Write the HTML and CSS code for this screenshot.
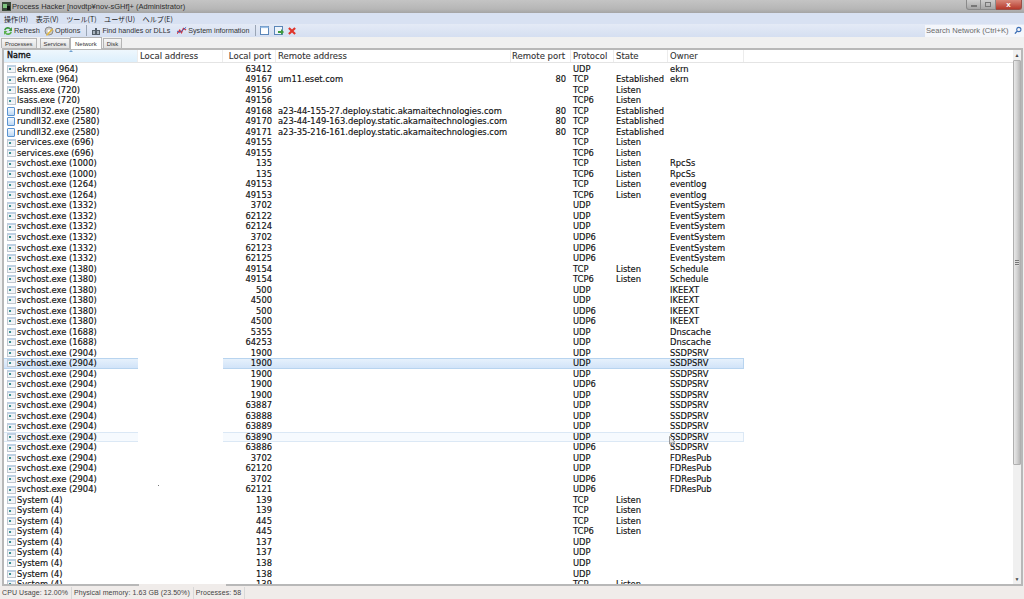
FILE: index.html
```html
<!DOCTYPE html>
<html lang="ja">
<head>
<meta charset="utf-8">
<title>Process Hacker</title>
<link rel="stylesheet" href="styles.css">
</head>
<body>
<div class="window">
  <header class="titlebar">
    <svg class="appicon" width="9" height="9" viewBox="0 0 9 9"><rect width="9" height="9" fill="#3a4a3a"/><rect x="1" y="2" width="4" height="4" fill="#7fc47f"/><rect x="5" y="4" width="3" height="4" fill="#111"/></svg>
    <span class="titletext">Process Hacker [novdtp¥nov-sGHf]+ (Administrator)</span>
    <div class="winbtns"><span class="wb min"><i></i></span><span class="wb max"><i></i></span><span class="wb close">x</span></div>
  </header>
  <nav class="menubar"><span>操作(H)</span><span>表示(V)</span><span>ツール(T)</span><span>ユーザ(U)</span><span>ヘルプ(E)</span></nav>
  <div class="toolbar">
    <span class="tool"><svg width="10" height="10" viewBox="0 0 10 10"><path d="M1 4 A4 4 0 0 1 8 2.5 L9 1 V5 H5.5 L7 3.6 A2.6 2.6 0 0 0 2.5 4.5Z" fill="#3f9a3f"/><path d="M9 6 A4 4 0 0 1 2 7.5 L1 9 V5 H4.5 L3 6.4 A2.6 2.6 0 0 0 7.5 5.5Z" fill="#5ab04f"/></svg>Refresh</span>
    <span class="tool"><svg width="10" height="10" viewBox="0 0 10 10"><circle cx="5" cy="5" r="4" fill="#c9c9c9" stroke="#8c8c8c"/><circle cx="5" cy="5" r="1.5" fill="#fff"/><path d="M2 9 L8 2.5 L9 3.5 L3 10Z" fill="#e6b93c"/></svg>Options</span>
    <span class="sep"></span>
    <span class="tool find"><svg width="10" height="10" viewBox="0 0 10 10"><path d="M1 4h3V2h2v2h3v5H1z" fill="#55606b"/><path d="M2 5h2v3H2zM6 5h2v3H6z" fill="#a8b3bd"/></svg>Find handles or DLLs</span>
    <span class="tool sysinfo"><svg width="10" height="10" viewBox="0 0 11 10"><path d="M0 8 L3 4 L5 7 L7 2 L10 4" fill="none" stroke="#d9363e" stroke-width="1.3"/><path d="M0 5 L3 7 L6 4 L10 1" fill="none" stroke="#2c5fbf" stroke-width="1"/></svg>System information</span>
    <span class="sep"></span>
    <span class="tool iconly"><svg width="9" height="9" viewBox="0 0 9 9"><rect x=".5" y=".5" width="8" height="8" fill="#fff" stroke="#5b86b8"/><rect x=".5" y=".5" width="8" height="1.6" fill="#9cc0e6"/></svg></span>
    <span class="tool iconly tight"><svg width="10" height="10" viewBox="0 0 10 10"><rect x=".5" y=".5" width="8" height="8" fill="#eef4fb" stroke="#5b86b8"/><path d="M4 5h3V3l3 3-3 3V7H4z" fill="#3f9a3f"/></svg></span>
    <span class="tool iconly"><svg width="8" height="8" viewBox="0 0 9 9"><path d="M1 1 L8 8 M8 1 L1 8" stroke="#e0352b" stroke-width="2.4"/></svg></span>
    <div class="search"><span>Search Network (Ctrl+K)</span><svg width="8" height="9" viewBox="0 0 9 9"><circle cx="5.4" cy="3.4" r="2.4" fill="none" stroke="#3c6fb5" stroke-width="1.2"/><path d="M3.6 5.2 L1 8" stroke="#3c6fb5" stroke-width="1.6"/></svg></div>
  </div>
  <div class="tabs"><span class="tab">Processes</span><span class="tab">Services</span><span class="tab active">Network</span><span class="tab">Disk</span></div>
  <main class="panel">
    <div class="listarea">
      <div class="r head"><span class="n hot">Name</span><span class="la">Local address</span><span class="lp">Local port</span><span class="ra">Remote address</span><span class="rp">Remote port</span><span>Protocol</span><span>State</span><span>Owner</span></div>
      <div class="rows">
<div class="r"><span class="n"><i class="ic"></i>ekrn.exe (964)</span><span class="la"></span><span class="lp">63412</span><span class="ra"></span><span class="rp"></span><span>UDP</span><span></span><span>ekrn</span></div>
<div class="r"><span class="n"><i class="ic"></i>ekrn.exe (964)</span><span class="la"></span><span class="lp">49167</span><span class="ra">um11.eset.com</span><span class="rp">80</span><span>TCP</span><span>Established</span><span>ekrn</span></div>
<div class="r"><span class="n"><i class="ic"></i>lsass.exe (720)</span><span class="la"></span><span class="lp">49156</span><span class="ra"></span><span class="rp"></span><span>TCP</span><span>Listen</span><span></span></div>
<div class="r"><span class="n"><i class="ic"></i>lsass.exe (720)</span><span class="la"></span><span class="lp">49156</span><span class="ra"></span><span class="rp"></span><span>TCP6</span><span>Listen</span><span></span></div>
<div class="r"><span class="n"><i class="ic doc"></i>rundll32.exe (2580)</span><span class="la"></span><span class="lp">49168</span><span class="ra">a23-44-155-27.deploy.static.akamaitechnologies.com</span><span class="rp">80</span><span>TCP</span><span>Established</span><span></span></div>
<div class="r"><span class="n"><i class="ic doc"></i>rundll32.exe (2580)</span><span class="la"></span><span class="lp">49170</span><span class="ra">a23-44-149-163.deploy.static.akamaitechnologies.com</span><span class="rp">80</span><span>TCP</span><span>Established</span><span></span></div>
<div class="r"><span class="n"><i class="ic doc"></i>rundll32.exe (2580)</span><span class="la"></span><span class="lp">49171</span><span class="ra">a23-35-216-161.deploy.static.akamaitechnologies.com</span><span class="rp">80</span><span>TCP</span><span>Established</span><span></span></div>
<div class="r"><span class="n"><i class="ic"></i>services.exe (696)</span><span class="la"></span><span class="lp">49155</span><span class="ra"></span><span class="rp"></span><span>TCP</span><span>Listen</span><span></span></div>
<div class="r"><span class="n"><i class="ic"></i>services.exe (696)</span><span class="la"></span><span class="lp">49155</span><span class="ra"></span><span class="rp"></span><span>TCP6</span><span>Listen</span><span></span></div>
<div class="r"><span class="n"><i class="ic"></i>svchost.exe (1000)</span><span class="la"></span><span class="lp">135</span><span class="ra"></span><span class="rp"></span><span>TCP</span><span>Listen</span><span>RpcSs</span></div>
<div class="r"><span class="n"><i class="ic"></i>svchost.exe (1000)</span><span class="la"></span><span class="lp">135</span><span class="ra"></span><span class="rp"></span><span>TCP6</span><span>Listen</span><span>RpcSs</span></div>
<div class="r"><span class="n"><i class="ic"></i>svchost.exe (1264)</span><span class="la"></span><span class="lp">49153</span><span class="ra"></span><span class="rp"></span><span>TCP</span><span>Listen</span><span>eventlog</span></div>
<div class="r"><span class="n"><i class="ic"></i>svchost.exe (1264)</span><span class="la"></span><span class="lp">49153</span><span class="ra"></span><span class="rp"></span><span>TCP6</span><span>Listen</span><span>eventlog</span></div>
<div class="r"><span class="n"><i class="ic"></i>svchost.exe (1332)</span><span class="la"></span><span class="lp">3702</span><span class="ra"></span><span class="rp"></span><span>UDP</span><span></span><span>EventSystem</span></div>
<div class="r"><span class="n"><i class="ic"></i>svchost.exe (1332)</span><span class="la"></span><span class="lp">62122</span><span class="ra"></span><span class="rp"></span><span>UDP</span><span></span><span>EventSystem</span></div>
<div class="r"><span class="n"><i class="ic"></i>svchost.exe (1332)</span><span class="la"></span><span class="lp">62124</span><span class="ra"></span><span class="rp"></span><span>UDP</span><span></span><span>EventSystem</span></div>
<div class="r"><span class="n"><i class="ic"></i>svchost.exe (1332)</span><span class="la"></span><span class="lp">3702</span><span class="ra"></span><span class="rp"></span><span>UDP6</span><span></span><span>EventSystem</span></div>
<div class="r"><span class="n"><i class="ic"></i>svchost.exe (1332)</span><span class="la"></span><span class="lp">62123</span><span class="ra"></span><span class="rp"></span><span>UDP6</span><span></span><span>EventSystem</span></div>
<div class="r"><span class="n"><i class="ic"></i>svchost.exe (1332)</span><span class="la"></span><span class="lp">62125</span><span class="ra"></span><span class="rp"></span><span>UDP6</span><span></span><span>EventSystem</span></div>
<div class="r"><span class="n"><i class="ic"></i>svchost.exe (1380)</span><span class="la"></span><span class="lp">49154</span><span class="ra"></span><span class="rp"></span><span>TCP</span><span>Listen</span><span>Schedule</span></div>
<div class="r"><span class="n"><i class="ic"></i>svchost.exe (1380)</span><span class="la"></span><span class="lp">49154</span><span class="ra"></span><span class="rp"></span><span>TCP6</span><span>Listen</span><span>Schedule</span></div>
<div class="r"><span class="n"><i class="ic"></i>svchost.exe (1380)</span><span class="la"></span><span class="lp">500</span><span class="ra"></span><span class="rp"></span><span>UDP</span><span></span><span>IKEEXT</span></div>
<div class="r"><span class="n"><i class="ic"></i>svchost.exe (1380)</span><span class="la"></span><span class="lp">4500</span><span class="ra"></span><span class="rp"></span><span>UDP</span><span></span><span>IKEEXT</span></div>
<div class="r"><span class="n"><i class="ic"></i>svchost.exe (1380)</span><span class="la"></span><span class="lp">500</span><span class="ra"></span><span class="rp"></span><span>UDP6</span><span></span><span>IKEEXT</span></div>
<div class="r"><span class="n"><i class="ic"></i>svchost.exe (1380)</span><span class="la"></span><span class="lp">4500</span><span class="ra"></span><span class="rp"></span><span>UDP6</span><span></span><span>IKEEXT</span></div>
<div class="r"><span class="n"><i class="ic"></i>svchost.exe (1688)</span><span class="la"></span><span class="lp">5355</span><span class="ra"></span><span class="rp"></span><span>UDP</span><span></span><span>Dnscache</span></div>
<div class="r"><span class="n"><i class="ic"></i>svchost.exe (1688)</span><span class="la"></span><span class="lp">64253</span><span class="ra"></span><span class="rp"></span><span>UDP</span><span></span><span>Dnscache</span></div>
<div class="r"><span class="n"><i class="ic"></i>svchost.exe (2904)</span><span class="la"></span><span class="lp">1900</span><span class="ra"></span><span class="rp"></span><span>UDP</span><span></span><span>SSDPSRV</span></div>
<div class="r sel"><span class="n"><i class="ic"></i>svchost.exe (2904)</span><span class="la"></span><span class="lp">1900</span><span class="ra"></span><span class="rp"></span><span>UDP</span><span></span><span>SSDPSRV</span></div>
<div class="r"><span class="n"><i class="ic"></i>svchost.exe (2904)</span><span class="la"></span><span class="lp">1900</span><span class="ra"></span><span class="rp"></span><span>UDP</span><span></span><span>SSDPSRV</span></div>
<div class="r"><span class="n"><i class="ic"></i>svchost.exe (2904)</span><span class="la"></span><span class="lp">1900</span><span class="ra"></span><span class="rp"></span><span>UDP6</span><span></span><span>SSDPSRV</span></div>
<div class="r"><span class="n"><i class="ic"></i>svchost.exe (2904)</span><span class="la"></span><span class="lp">1900</span><span class="ra"></span><span class="rp"></span><span>UDP</span><span></span><span>SSDPSRV</span></div>
<div class="r"><span class="n"><i class="ic"></i>svchost.exe (2904)</span><span class="la"></span><span class="lp">63887</span><span class="ra"></span><span class="rp"></span><span>UDP</span><span></span><span>SSDPSRV</span></div>
<div class="r"><span class="n"><i class="ic"></i>svchost.exe (2904)</span><span class="la"></span><span class="lp">63888</span><span class="ra"></span><span class="rp"></span><span>UDP</span><span></span><span>SSDPSRV</span></div>
<div class="r"><span class="n"><i class="ic"></i>svchost.exe (2904)</span><span class="la"></span><span class="lp">63889</span><span class="ra"></span><span class="rp"></span><span>UDP</span><span></span><span>SSDPSRV</span></div>
<div class="r hov"><span class="n"><i class="ic"></i>svchost.exe (2904)</span><span class="la"></span><span class="lp">63890</span><span class="ra"></span><span class="rp"></span><span>UDP</span><span></span><span>SSDPSRV</span></div>
<div class="r"><span class="n"><i class="ic"></i>svchost.exe (2904)</span><span class="la"></span><span class="lp">63886</span><span class="ra"></span><span class="rp"></span><span>UDP6</span><span></span><span>SSDPSRV</span></div>
<div class="r"><span class="n"><i class="ic"></i>svchost.exe (2904)</span><span class="la"></span><span class="lp">3702</span><span class="ra"></span><span class="rp"></span><span>UDP</span><span></span><span>FDResPub</span></div>
<div class="r"><span class="n"><i class="ic"></i>svchost.exe (2904)</span><span class="la"></span><span class="lp">62120</span><span class="ra"></span><span class="rp"></span><span>UDP</span><span></span><span>FDResPub</span></div>
<div class="r"><span class="n"><i class="ic"></i>svchost.exe (2904)</span><span class="la"></span><span class="lp">3702</span><span class="ra"></span><span class="rp"></span><span>UDP6</span><span></span><span>FDResPub</span></div>
<div class="r"><span class="n"><i class="ic"></i>svchost.exe (2904)</span><span class="la"></span><span class="lp">62121</span><span class="ra"></span><span class="rp"></span><span>UDP6</span><span></span><span>FDResPub</span></div>
<div class="r"><span class="n"><i class="ic"></i>System (4)</span><span class="la"></span><span class="lp">139</span><span class="ra"></span><span class="rp"></span><span>TCP</span><span>Listen</span><span></span></div>
<div class="r"><span class="n"><i class="ic"></i>System (4)</span><span class="la"></span><span class="lp">139</span><span class="ra"></span><span class="rp"></span><span>TCP</span><span>Listen</span><span></span></div>
<div class="r"><span class="n"><i class="ic"></i>System (4)</span><span class="la"></span><span class="lp">445</span><span class="ra"></span><span class="rp"></span><span>TCP</span><span>Listen</span><span></span></div>
<div class="r"><span class="n"><i class="ic"></i>System (4)</span><span class="la"></span><span class="lp">445</span><span class="ra"></span><span class="rp"></span><span>TCP6</span><span>Listen</span><span></span></div>
<div class="r"><span class="n"><i class="ic"></i>System (4)</span><span class="la"></span><span class="lp">137</span><span class="ra"></span><span class="rp"></span><span>UDP</span><span></span><span></span></div>
<div class="r"><span class="n"><i class="ic"></i>System (4)</span><span class="la"></span><span class="lp">137</span><span class="ra"></span><span class="rp"></span><span>UDP</span><span></span><span></span></div>
<div class="r"><span class="n"><i class="ic"></i>System (4)</span><span class="la"></span><span class="lp">138</span><span class="ra"></span><span class="rp"></span><span>UDP</span><span></span><span></span></div>
<div class="r"><span class="n"><i class="ic"></i>System (4)</span><span class="la"></span><span class="lp">138</span><span class="ra"></span><span class="rp"></span><span>UDP</span><span></span><span></span></div>
<div class="r"><span class="n"><i class="ic"></i>System (4)</span><span class="la"></span><span class="lp">139</span><span class="ra"></span><span class="rp"></span><span>TCP</span><span>Listen</span><span></span></div>
      </div>
      <span class="sortarrow"></span>
      <span class="speck"></span>
      <svg class="cursor" width="7" height="10" viewBox="0 0 7 10"><path d="M.5.5V8L2.3 6.5 3.5 9.5 5 9 3.8 6H6Z" fill="#e8e8e8" stroke="#777" stroke-width=".7"/></svg>
    </div>
    <div class="scrollbar"><span class="sb-btn">▲</span><span class="sb-thumb"><i class="sb-grip"></i></span><span class="sb-track"></span><span class="sb-btn">▼</span></div>
  </main>
  <footer class="statusbar"><span>CPU Usage: 12.00%</span><span>Physical memory: 1.63 GB (23.50%)</span><span>Processes: 58</span></footer>
</div>
</body>
</html>
```
FILE: styles.css
```css
* { box-sizing: border-box; }
html, body { margin: 0; padding: 0; height: 100%; overflow: hidden; }
body { background: #f0f0f0; color: #222; font-family: "Liberation Sans", Arial, sans-serif; font-size: 7.4px; }
.window { display: flex; flex-direction: column; width: 1024px; height: 599px; }

.titlebar { display: flex; align-items: center; height: 13px; flex: none; padding-left: 2px; background: linear-gradient(#c4c4c4, #b6b6b6 70%, #a4a4a4); }
.appicon { margin-right: 1px; }
.titletext { color: #2c2c2c; font-size: 7.5px; white-space: nowrap; }
.winbtns { display: flex; margin-left: auto; align-self: flex-start; margin-right: 2px; }
.wb { display: flex; align-items: center; justify-content: center; height: 10px; width: 15px; border: 1px solid #8a8a8a; border-top: 0; border-left: 0; background: linear-gradient(#cfcfcf, #a6a6a6); }
.wb.min { border-left: 1px solid #8a8a8a; border-radius: 0 0 0 3px; }
.wb.min i { width: 6px; height: 2px; margin-top: 3px; border: 1px solid #777; background: #eee; }
.wb.max i { width: 6px; height: 5px; border: 1px solid #777; }
.wb.close { width: 26px; color: #fff; font-weight: bold; font-size: 8px; line-height: 8px; border-color: #9a5048; border-radius: 0 0 3px 0; background: linear-gradient(#d8887a, #b63a2c); }

.menubar { display: flex; gap: 7.5px; align-items: center; height: 11px; flex: none; padding-left: 4px; background: #d8e1f2; color: #222; font-family: "Noto Sans CJK JP", "Liberation Sans", sans-serif; font-size: 7.1px; white-space: nowrap; }

.toolbar { display: flex; align-items: center; height: 13px; flex: none; padding-left: 3px; background: linear-gradient(#e4eaf6, #d5dff1); color: #333; white-space: nowrap; }
.tool { display: flex; align-items: center; gap: 1px; margin-right: 4px; }
.tool.find { margin-right: 7px; font-size: 7.15px; }
.tool.sysinfo { margin-right: 4px; font-size: 7.15px; }
.tool.iconly { margin-right: 5px; }
.tool.iconly.tight { margin-right: 4px; }
.sep { width: 1px; height: 11px; margin: 0 4px 0 2px; background: #9aa5b5; }
.search { display: flex; align-items: center; justify-content: space-between; margin-left: auto; width: 99px; height: 12px; padding: 0 2px 0 1px; background: #f4f6fb; color: #6a6a6a; font-size: 7.6px; }

.tabs { display: flex; align-items: flex-end; height: 11px; flex: none; padding-left: 1px; background: #f0f0f0; }
.tab { display: flex; align-items: center; height: 10px; padding: 0 3px; margin-right: 3px; border: 1px solid #b5b5b5; border-bottom: 0; background: linear-gradient(#f6f6f6, #e0e0e0); color: #333; font-size: 5.9px; }
.tab:nth-child(2) { margin-right: 0; }
.tab:nth-child(3) { margin-right: 1px; }
.tab.active { height: 12px; padding: 0 4px; background: #fff; position: relative; z-index: 1; margin-bottom: -1px; }

.panel { position: relative; display: flex; flex: 1; min-height: 0; margin: 0 1px 0 2px; border: 2px solid #b8b8b8; background: #fff; }
.panel::after { content: ""; position: absolute; left: 135px; bottom: -2px; width: 87px; height: 2px; background: #f0ecea; }
.listarea { position: relative; flex: 1; min-width: 0; display: flex; flex-direction: column; overflow: hidden; }
.rows { flex: 1; overflow: hidden; padding-top: .75px; }

.r { display: grid; grid-template-columns: 134px 85px 53px 235px 60px 43px 54px 76px; height: 10.52px; line-height: 10.52px; font-family: "DejaVu Sans", sans-serif; font-size: 8.35px; color: #111; white-space: nowrap; -webkit-text-stroke: .15px #111; }
.r > span { display: block; padding-left: 2px; overflow: hidden; }
.r .n { display: flex; align-items: center; padding-left: 3px; }
.r .lp { text-align: right; padding: 0 4px 0 0; }
.r .rp { text-align: right; padding: 0 5px 0 0; }

.r.head { height: 13px; line-height: 12px; flex: none; border-bottom: 1px solid #e4e4e4; color: #333; background: #fff; -webkit-text-stroke: .1px #333; }
.head > span { border-right: 1px solid #ececec; font-size: 8.5px; }
.head .hot { color: #111; font-size: 8px; background: linear-gradient(#eef7fd, #dceffc); -webkit-text-stroke: .35px #111; }
.sortarrow { position: absolute; left: 65px; top: 0; border: 2px solid transparent; border-top: 0; border-bottom: 2px solid #6d9fd0; }
.speck { position: absolute; left: 154px; top: 435px; width: 1px; height: 1px; background: #777; }

.ic { flex: none; width: 9px; height: 8px; margin-right: 1px; border: 1px solid #c0c7d0; border-top: 2px solid #bed0e3; background: linear-gradient(90deg, #3a9090 0 2px, #e8eef4 2px) 1px 1px / 5px 2px no-repeat, #f2f5f8; }
.ic.doc { width: 8px; height: 9px; margin-right: 2px; border: 1px solid #5b93d0; border-radius: 1px; background: linear-gradient(#f4f9ff, #bcd8f4); }

.sel > span:not(.la) { background: linear-gradient(#e8f2fc, #cfe2f8); box-shadow: inset 0 1px #b8d4ef, inset 0 -1px #b8d4ef; }
.sel > span:last-child { box-shadow: inset 0 1px #b8d4ef, inset 0 -1px #b8d4ef, inset -1px 0 #b8d4ef; }
.hov > span:not(.la) { background: #f6fafe; box-shadow: inset 0 1px #dbe8f5, inset 0 -1px #dbe8f5; }
.hov > span:last-child { box-shadow: inset 0 1px #dbe8f5, inset 0 -1px #dbe8f5, inset -1px 0 #dbe8f5; }

.cursor { position: absolute; left: 665px; top: 386px; }

.scrollbar { flex: none; width: 8px; display: flex; flex-direction: column; background: #f0f0f0; }
.sb-btn { flex: none; height: 10px; font-size: 5px; line-height: 10px; text-align: center; color: #444; }
.sb-thumb { flex: none; display: flex; align-items: center; justify-content: center; height: 405px; border: 1px solid #b0b0b0; border-radius: 1px; background: linear-gradient(90deg, #e8e8e8, #d4d4d4 50%, #b8b8b8); }
.sb-grip { width: 4px; height: 6px; background: repeating-linear-gradient(#777 0 1px, #ddd 1px 2px); }
.sb-track { flex: 1; }

.statusbar { display: flex; align-items: center; height: 13px; flex: none; padding-left: 2px; background: #f0ecea; color: #444; font-size: 7px; letter-spacing: .08px; }
.statusbar span { padding-right: 3px; margin-right: 2px; border-right: 1px solid #d8d8d8; line-height: 12px; white-space: nowrap; }
```
